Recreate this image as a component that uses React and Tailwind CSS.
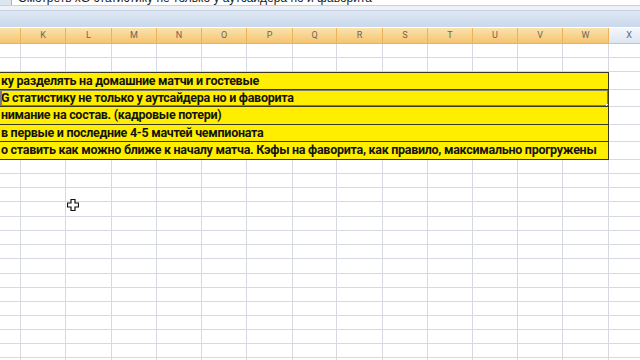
import React from "react";

const widths = [21, 45, 46, 45, 45, 45, 46, 44, 46, 45, 45, 45, 45, 46, 40];
const letters = ["J", "K", "L", "M", "N", "O", "P", "Q", "R", "S", "T", "U", "V", "W", "X"];

const lines = [
  "ку разделять на домашние матчи и гостевые",
  "G статистику не только у аутсайдера но и фаворита",
  "нимание на состав. (кадровые потери)",
  "в первые и последние 4-5 мачтей чемпионата",
  "о ставить как можно ближе к началу матча. Кэфы на фаворита, как правило, максимально прогружены",
];
const yellowHeights = ["h-[18px]", "h-[17px]", "h-[18px]", "h-[17px]", "h-[18px]"];
const bodyHeights = [14, 14, 14, 15, 14, 14, 14, 15, 14, 14, 14, 14, 14, 14, 14];

const GridRow = ({ h }) => (
  <div className="flex shrink-0" style={{ height: h }}>
    {widths.map((w, i) => (
      <div
        key={i}
        className="shrink-0 border-r border-b border-[#d6dae0] bg-white"
        style={{ width: w }}
      />
    ))}
  </div>
);

const Cursor = () => (
  <svg
    className="absolute left-[67px] top-[199px]"
    width="12"
    height="12"
    viewBox="0 0 12 12"
  >
    <path
      d="M4 0.5h4v3.5h3.5v4H8v3.5H4V8H0.5V4H4z"
      fill="#fff"
      stroke="#111"
      strokeWidth="1.2"
    />
  </svg>
);

export default function App() {
  return (
    <div className="relative w-[640px] h-[360px] overflow-hidden bg-white font-['Roboto',sans-serif]">
      {/* formula bar */}
      <div className="flex h-[6px] overflow-hidden bg-white border-b border-[#c6d2e1]">
        <div className="w-[12px] shrink-0 bg-[#dde5ee] border-r border-[#9fb2c9]" />
        <div className="pl-[6px] -mt-[8px] text-[12px] leading-[12px] text-[#222] whitespace-nowrap font-['Liberation_Sans',sans-serif]">
          Смотреть xG статистику не только у аутсайдера но и фаворита
        </div>
      </div>
      <div className="h-[4px] bg-[#eef2f7]" />
      <div className="h-[17px] bg-gradient-to-b from-[#dfe8f4] to-[#c9d8ec] border-t border-[#c2d0e2]" />
      <div className="h-[1px] bg-white" />

      {/* column headers */}
      <div className="flex h-[16px]">
        {letters.map((l, i) => (
          <div
            key={l}
            className={
              i < 14
                ? "shrink-0 flex items-center justify-center text-[9px] text-[#6e6450] bg-gradient-to-b from-[#fbe2ad] to-[#f5c470] border-r border-b border-[#e9b35c]"
                : "shrink-0 flex items-center justify-center text-[9px] text-[#5a6577] bg-gradient-to-b from-[#f4f7fb] to-[#dde5ef] border-b border-[#b9c7d9]"
            }
            style={{ width: widths[i] }}
          >
            {i > 0 ? l : ""}
          </div>
        ))}
      </div>

      <GridRow h={14} />
      <GridRow h={14} />

      {/* yellow notes */}
      {lines.map((t, i) => (
        <div key={i} className={`flex ${yellowHeights[i]}`}>
          <div
            className={`relative w-[609px] shrink-0 bg-[#ffee00] border-b border-r border-[#3b3a20] ${i === 0 ? "border-t" : ""} flex items-center overflow-hidden`}
          >
            <span className="pl-[1px] text-[12.5px] font-bold text-[#141414] whitespace-nowrap tracking-[-0.28px]">
              {t}
            </span>
            {i === 1 && (
              <>
                <div className="absolute -inset-y-[1px] left-0 right-[-1px] border-2 border-[#7d7d7d]" />
                <div className="absolute right-[-3px] bottom-[-3px] w-[5px] h-[5px] bg-[#6a6a6a] border border-white" />
              </>
            )}
          </div>
          <div className="flex-1 border-b border-[#d6dae0] bg-white" />
        </div>
      ))}

      {bodyHeights.map((h, i) => (
        <GridRow key={i} h={h} />
      ))}

      <Cursor />
    </div>
  );
}
